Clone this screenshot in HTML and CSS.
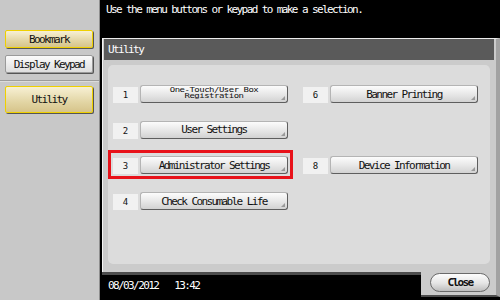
FILE: index.html
```html
<!DOCTYPE html>
<html lang="en">
<head>
    <meta charset="UTF-8">
    <title>Utility</title>
    <link rel="stylesheet" href="styles.css">
</head>
<body>
<div class="screen">
    <aside class="side">
        <div class="side-top">
            <button class="sbtn yellow">Bookmark</button>
            <button class="sbtn">Display Keypad</button>
        </div>
        <div class="side-bottom">
            <button class="sbtn yellow tall">Utility</button>
        </div>
    </aside>
    <main class="main">
        <div class="msg">Use the menu buttons or keypad to make a selection.</div>
        <section class="panel">
            <div class="panel-head">Utility</div>
            <div class="panel-body">
                <div class="grid">
                    <div class="item"><span class="num">1</span><button class="mbtn"><span class="two">One-Touch/User Box<br>Registration</span></button></div>
                    <div class="item"><span class="num">6</span><button class="mbtn">Banner Printing</button></div>
                    <div class="item"><span class="num">2</span><button class="mbtn">User Settings</button></div>
                    <div class="item"></div>
                    <div class="item selected"><span class="num">3</span><button class="mbtn">Administrator Settings</button></div>
                    <div class="item"><span class="num">8</span><button class="mbtn">Device Information</button></div>
                    <div class="item"><span class="num">4</span><button class="mbtn">Check Consumable Life</button></div>
                    <div class="item"></div>
                </div>
            </div>
        </section>
        <footer class="foot">
            <div class="clock"><span class="date">08/03/2012</span><span>13:42</span></div>
            <div class="tab"><button class="close">Close</button></div>
        </footer>
    </main>
</div>
</body>
</html>
```

FILE: styles.css
```css
* { box-sizing: border-box; }
body { margin: 0; font-family: 'DejaVu Sans Mono', monospace; font-size: 11px; letter-spacing: -1.6px; background: #000; }
button { font-family: inherit; font-size: inherit; letter-spacing: inherit; color: #111; padding: 0; cursor: pointer; }
.screen { display: flex; width: 500px; height: 300px; overflow: hidden; }

/* left column */
.side { width: 100px; background: #c8c8c8; border-right: 1px solid #8e8e8e; display: flex; flex-direction: column; }
.side-top { height: 81px; padding: 30px 0 0 5px; border-bottom: 1px solid #9c9c9c; display: flex; flex-direction: column; gap: 7px; }
.side-bottom { padding: 4px 0 0 5px; border-top: 1px solid #dcdcdc; }
.sbtn { width: 88px; height: 18px; border: 1px solid #9a9a9a; border-radius: 2px; background: linear-gradient(#fbfbfb, #dedede); box-shadow: 1px 1px 0 #555; }
.sbtn.yellow { border: 1.5px solid #efd000; background: linear-gradient(#f7f0d4, #e2d5a4 60%, #d6c48a); }
.sbtn.tall { height: 27px; }

/* main area */
.main { flex: 1; display: flex; flex-direction: column; background: #000; padding-left: 2px; }
.msg { height: 38px; color: #fff; padding: 3px 0 0 4px; }
.panel { flex: 1; background: #cbcbcb; border-top: 1px solid #ececec; border-left: 1px solid #f4f4f4; border-right: 4px solid #a2a2a2; display: flex; flex-direction: column; }
.panel-head { height: 21px; margin: 0 2px 0 1px; background: #5a5a5a; color: #fff; padding: 4px 0 0 4px; }
.panel-body { flex: 1; margin: 5px 6px 8px 5px; background: #dcdcdc; border-radius: 5px; }
.grid { display: grid; grid-template-columns: 175px 175px; grid-auto-rows: 18px; column-gap: 15px; row-gap: 17.7px; padding: 20px 0 0 5px; }
.item { display: flex; align-items: flex-end; gap: 2px; position: relative; }
.num { width: 25px; height: 16px; background: #f1f1f1; text-align: center; line-height: 16px; font-size: 9px; letter-spacing: 0; color: #111; }
.mbtn { position: relative; width: 148px; height: 18px; border: 1px solid #b4b4b4; border-right-color: #5e5e5e; border-bottom-color: #5e5e5e; border-radius: 3px; background: linear-gradient(#fcfcfc, #e6e6e6 55%, #d2d2d2); }
.mbtn::after { content: ''; position: absolute; right: 2px; bottom: 2px; border-left: 4px solid transparent; border-bottom: 4px solid #9a9a9a; }
.two { display: inline-block; font-size: 9px; line-height: 8px; letter-spacing: -0.5px; transform: scaleY(0.72); margin-top: -1px; }
.selected::before { content: ''; position: absolute; top: -6px; left: -5px; right: -5px; bottom: -5px; border: 3px solid #e8121a; }

/* bottom strip */
.foot { height: 28px; display: flex; margin-left: -2px; }
.clock { flex: 1; border-top: 3px solid #4c4c4c; color: #fff; padding: 4px 0 0 6px; margin-left: 2px; }
.clock .date { margin-right: 16px; }
.tab { width: 79px; height: 25px; background: #cbcbcb; border-right: 4px solid #a2a2a2; border-bottom: 2px solid #4c4c4c; padding: 1px 0 0 9px; }
.close { width: 60px; height: 19px; border: 1px solid #6a6a6a; border-radius: 10px; background: linear-gradient(#fdfdfd, #e4e4e4 55%, #bdbdbd); font-weight: bold; }
```
